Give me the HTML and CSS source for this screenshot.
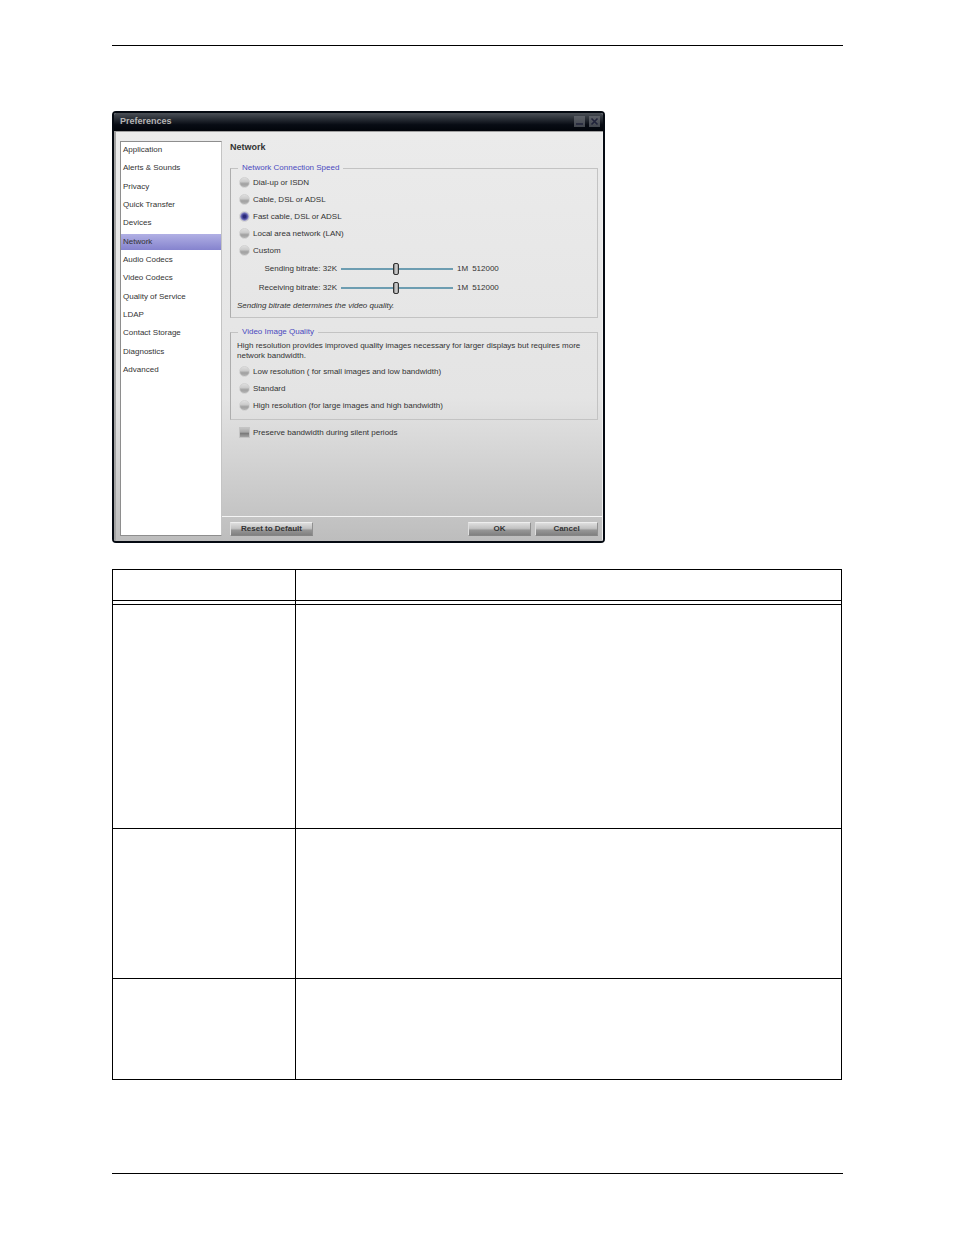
FILE: index.html
```html
<!DOCTYPE html>
<html lang="en">
   <head>
      <meta charset="UTF-8">
      <meta name="viewport" content="width=device-width, initial-scale=1.0">
      <title>Preferences</title>
      <link rel="stylesheet" href="styles.css">
   </head>
   <body>
      <main class="page">
         <section class="window">
            <header class="titlebar">
               <h1>Preferences</h1>
               <button class="win-btn" type="button" aria-label="Minimize">
                  <svg viewBox="0 0 11 11"><path d="M2 8h7" /></svg>
               </button>
               <button class="win-btn" type="button" aria-label="Close">
                  <svg viewBox="0 0 11 11"><path d="M2.5 2.5l6 6M8.5 2.5l-6 6" /></svg>
               </button>
            </header>
            <div class="window-body">
               <nav class="sidebar">
                  <ul>
                     <li><a href="#">Application</a></li>
                     <li><a href="#">Alerts &amp; Sounds</a></li>
                     <li><a href="#">Privacy</a></li>
                     <li><a href="#">Quick Transfer</a></li>
                     <li><a href="#">Devices</a></li>
                     <li><a href="#" class="active">Network</a></li>
                     <li><a href="#">Audio Codecs</a></li>
                     <li><a href="#">Video Codecs</a></li>
                     <li><a href="#">Quality of Service</a></li>
                     <li><a href="#">LDAP</a></li>
                     <li><a href="#">Contact Storage</a></li>
                     <li><a href="#">Diagnostics</a></li>
                     <li><a href="#">Advanced</a></li>
                  </ul>
               </nav>
               <form class="settings">
                  <h2>Network</h2>
                  <fieldset class="speed">
                     <legend>Network Connection Speed</legend>
                     <label class="option"><input type="radio" name="speed">Dial-up or ISDN</label>
                     <label class="option"><input type="radio" name="speed">Cable, DSL or ADSL</label>
                     <label class="option"><input type="radio" name="speed" checked>Fast cable, DSL or ADSL</label>
                     <label class="option"><input type="radio" name="speed">Local area network (LAN)</label>
                     <label class="option"><input type="radio" name="speed">Custom</label>
                     <div class="bitrate">
                        <label for="sending">Sending bitrate: 32K</label>
                        <input type="range" id="sending" min="0" max="100" value="49">
                        <span>1M</span>
                        <output for="sending">512000</output>
                     </div>
                     <div class="bitrate">
                        <label for="receiving">Receiving bitrate: 32K</label>
                        <input type="range" id="receiving" min="0" max="100" value="49">
                        <span>1M</span>
                        <output for="receiving">512000</output>
                     </div>
                     <p class="note">Sending bitrate determines the video quality.</p>
                  </fieldset>
                  <fieldset class="quality">
                     <legend>Video Image Quality</legend>
                     <p>High resolution provides improved quality images necessary for larger displays but requires more network bandwidth.</p>
                     <label class="option"><input type="radio" name="quality">Low resolution ( for small images and low bandwidth)</label>
                     <label class="option"><input type="radio" name="quality">Standard</label>
                     <label class="option"><input type="radio" name="quality">High resolution (for large images and high bandwidth)</label>
                  </fieldset>
                  <label class="option preserve"><input type="checkbox">Preserve bandwidth during silent periods</label>
                  <div class="actions">
                     <button class="btn reset" type="reset">Reset to Default</button>
                     <button class="btn" type="button">OK</button>
                     <button class="btn" type="button">Cancel</button>
                  </div>
               </form>
            </div>
         </section>
         <table class="grid">
            <thead>
               <tr><th></th><th></th></tr>
            </thead>
            <tbody>
               <tr class="tall"><td></td><td></td></tr>
               <tr class="medium"><td></td><td></td></tr>
               <tr class="short"><td></td><td></td></tr>
            </tbody>
         </table>
      </main>
   </body>
</html>
```
FILE: styles.css
```css
* {
box-sizing: border-box;
}
body {
margin: 0;
background-color: #fff;
color: #333;
font-family: "Liberation Sans", Arial, sans-serif;
font-size: 8px;
line-height: 10px;
}
h1,
h2,
p,
ul {
margin: 0;
}
.page {
margin: 45px 111px 60px 112px;
padding: 65px 0 93px;
border-top: 1px solid #000;
border-bottom: 1px solid #000;
}

/* preferences window */
.window {
max-width: 493px;
border: 2px solid #050a12;
border-radius: 4px;
overflow: hidden;
}
.titlebar {
display: flex;
align-items: center;
gap: 4px;
height: 18px;
padding: 0 3px 2px 6px;
background: linear-gradient(#4b5057, #262b33 35%, #080c14 65%, #02050b);
}
.titlebar h1 {
flex: 1;
color: #b4b4b4;
font-size: 9px;
}
.win-btn {
width: 11px;
height: 11px;
padding: 0;
border: 0;
background: linear-gradient(#5c6067, #42464e);
}
.win-btn svg {
display: block;
fill: none;
stroke: #20233a;
stroke-width: 1.6;
}
.window-body {
display: flex;
gap: 8px;
min-height: 410px;
padding: 9px 5px 5px 6px;
border-top: 1px solid #a0a0a0;
background: linear-gradient(#ebebeb, #e4e4e4 65%, #c6c6c6 92%, #bdbdbd);
box-shadow: inset 2px 0 #a2a2a2, inset -1px 0 #f0f0f0;
}
.sidebar {
flex: 0 0 102px;
border: 1px solid #8e8e8e;
border-right-color: #c4c4c4;
background-color: #fff;
}
.sidebar ul {
display: grid;
grid-auto-rows: 1fr;
gap: 2px;
height: 236px;
padding: 0;
list-style: none;
}
.sidebar a {
display: flex;
align-items: center;
height: 100%;
padding-left: 2px;
color: #333;
text-decoration: none;
}
.sidebar .active {
background: linear-gradient(#b1b0e4, #8583ce);
}
.settings {
flex: 1;
display: flex;
flex-direction: column;
}
.settings h2 {
margin-bottom: 10px;
font-size: 9px;
line-height: 12px;
}
fieldset {
margin: 0;
padding: 0 6px;
border: 1px solid #c3c3c3;
border-left-color: #adadad;
}
legend {
height: 10px;
margin-left: 1px;
padding: 0 4px;
color: #4a4ac0;
}
.speed {
padding-top: 1px;
padding-bottom: 2px;
margin-bottom: 9px;
}
.quality {
padding-top: 4px;
padding-bottom: 5px;
margin-bottom: 4px;
}
.quality p {
margin-bottom: 2px;
}
.option {
display: flex;
align-items: center;
gap: 3px;
height: 17px;
}
.option input {
appearance: none;
width: 11px;
height: 11px;
margin: 0 0 0 2px;
}
.option input[type="radio"] {
border: 1px solid #d2d2d2;
border-radius: 50%;
background: linear-gradient(#dedede, #cbcbcb 40%, #a0a0a0 65%, #b4b4b4);
}
.option input[type="radio"]:checked {
background: radial-gradient(circle, #292978 20%, #5858ab 45%, #b4b4d2 70%);
}
.option input[type="checkbox"] {
border: 1px solid #c4c4c4;
background: linear-gradient(#c4c4c4, #a8a8a8 45%, #7b7b7b 60%, #a2a2a2);
}
.preserve {
padding-left: 7px;
}
.bitrate {
display: grid;
grid-template-columns: 100px 112px auto 1fr;
align-items: center;
column-gap: 4px;
height: 19px;
}
.bitrate label {
text-align: right;
}
.bitrate input {
appearance: none;
width: 100%;
height: 14px;
margin: 0;
background: linear-gradient(#6d9db1, #6d9db1) center / 100% 2px no-repeat;
}
.bitrate input::-webkit-slider-thumb {
appearance: none;
width: 6px;
height: 12px;
border: 1px solid #333;
border-radius: 2px;
background: linear-gradient(90deg, #777, #d8d8d8 50%, #999);
}
.note {
font-style: italic;
line-height: 18px;
}
.actions {
display: flex;
gap: 4px;
margin: auto -5px 0 -8px;
padding: 5px 5px 0 8px;
border-top: 1px solid #f4f4f4;
}
.btn {
width: 63px;
height: 14px;
padding: 0;
border: 1px solid;
border-color: #eee #909090 #858585 #dedede;
background: linear-gradient(#dedede, #c2c2c2 45%, #969696 60%, #808080);
color: #333;
font-family: inherit;
font-size: 8px;
font-weight: bold;
line-height: 12px;
}
.reset {
width: 83px;
margin-right: auto;
}

/* description table */
.grid {
width: calc(100% - 1px);
margin-top: 26px;
border-collapse: collapse;
table-layout: fixed;
}
.grid th,
.grid td {
padding: 0;
border: 1px solid #000;
}
.grid th {
height: 35px;
background: linear-gradient(#000, #000) left 0 bottom 3px / 100% 1px no-repeat;
}
.grid th:first-child {
width: 183px;
}
.tall {
height: 224px;
}
.medium {
height: 150px;
}
.short {
height: 101px;
}
```
